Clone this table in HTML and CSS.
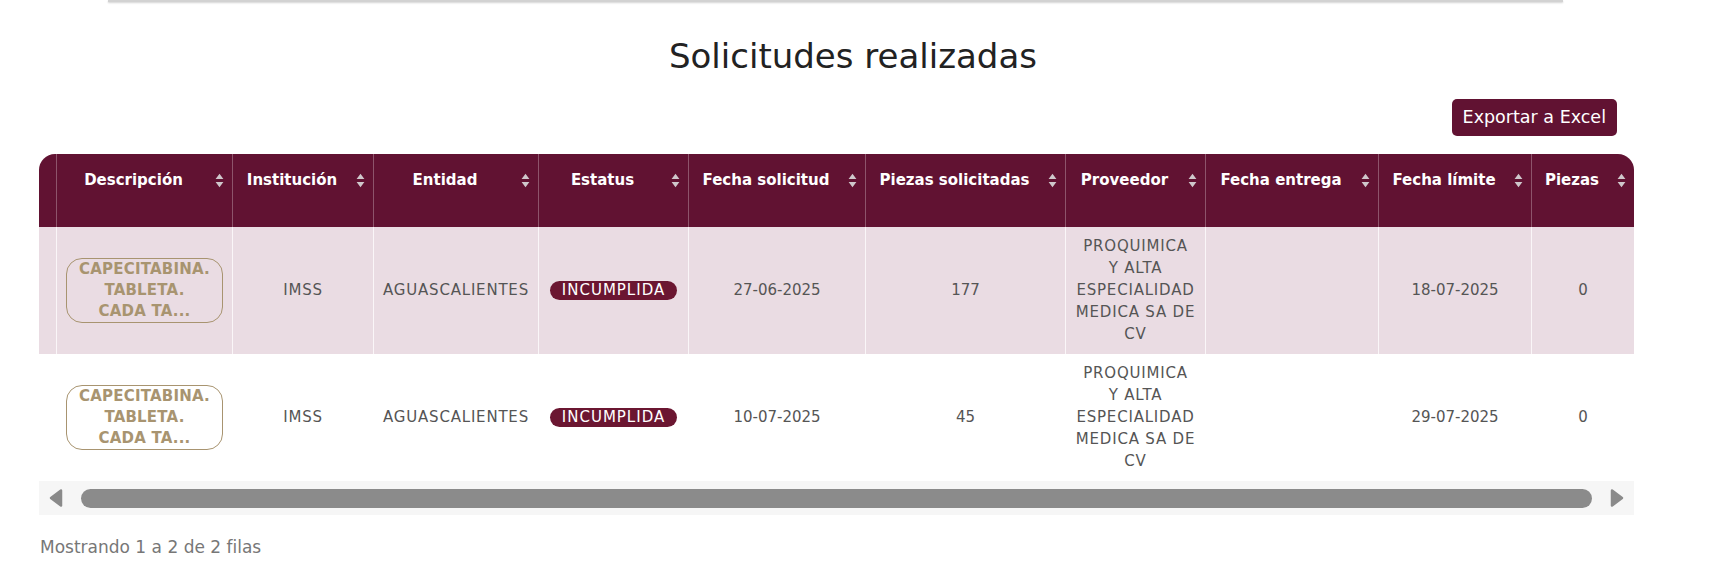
FILE: index.html
```html
<!DOCTYPE html>
<html lang="es">
<head>
<meta charset="utf-8">
<title>Solicitudes realizadas</title>
<link rel="stylesheet" href="styles.css">
</head>
<body>
<div class="topcard"></div>
<main class="section">
  <h1 class="title">Solicitudes realizadas</h1>
  <div class="toolbar">
    <button class="btn-export" type="button">Exportar a Excel</button>
  </div>
  <div class="table-wrap">
    <table class="grid">
      <colgroup>
        <col style="width:18px">
        <col style="width:176px">
        <col style="width:141px">
        <col style="width:165px">
        <col style="width:150px">
        <col style="width:177px">
        <col style="width:200px">
        <col style="width:140px">
        <col style="width:173px">
        <col style="width:153px">
        <col style="width:102px">
      </colgroup>
      <thead>
        <tr>
          <th class="th-blank"></th>
          <th><div class="th-inner"><span>Descripción</span></div><svg class="sort" viewBox="0 0 9 15"><path d="M4.5 0.8 L8.4 6 H0.6 Z M4.5 14.2 L0.6 9 H8.4 Z"/></svg></th>
          <th><div class="th-inner"><span>Institución</span></div><svg class="sort" viewBox="0 0 9 15"><path d="M4.5 0.8 L8.4 6 H0.6 Z M4.5 14.2 L0.6 9 H8.4 Z"/></svg></th>
          <th><div class="th-inner"><span>Entidad</span></div><svg class="sort" viewBox="0 0 9 15"><path d="M4.5 0.8 L8.4 6 H0.6 Z M4.5 14.2 L0.6 9 H8.4 Z"/></svg></th>
          <th><div class="th-inner"><span>Estatus</span></div><svg class="sort" viewBox="0 0 9 15"><path d="M4.5 0.8 L8.4 6 H0.6 Z M4.5 14.2 L0.6 9 H8.4 Z"/></svg></th>
          <th><div class="th-inner"><span>Fecha solicitud</span></div><svg class="sort" viewBox="0 0 9 15"><path d="M4.5 0.8 L8.4 6 H0.6 Z M4.5 14.2 L0.6 9 H8.4 Z"/></svg></th>
          <th><div class="th-inner"><span>Piezas solicitadas</span></div><svg class="sort" viewBox="0 0 9 15"><path d="M4.5 0.8 L8.4 6 H0.6 Z M4.5 14.2 L0.6 9 H8.4 Z"/></svg></th>
          <th><div class="th-inner"><span>Proveedor</span></div><svg class="sort" viewBox="0 0 9 15"><path d="M4.5 0.8 L8.4 6 H0.6 Z M4.5 14.2 L0.6 9 H8.4 Z"/></svg></th>
          <th><div class="th-inner"><span>Fecha entrega</span></div><svg class="sort" viewBox="0 0 9 15"><path d="M4.5 0.8 L8.4 6 H0.6 Z M4.5 14.2 L0.6 9 H8.4 Z"/></svg></th>
          <th><div class="th-inner"><span>Fecha límite</span></div><svg class="sort" viewBox="0 0 9 15"><path d="M4.5 0.8 L8.4 6 H0.6 Z M4.5 14.2 L0.6 9 H8.4 Z"/></svg></th>
          <th><div class="th-inner"><span>Piezas</span></div><svg class="sort" viewBox="0 0 9 15"><path d="M4.5 0.8 L8.4 6 H0.6 Z M4.5 14.2 L0.6 9 H8.4 Z"/></svg></th>
        </tr>
      </thead>
      <tbody>
        <tr class="row-odd">
          <td></td>
          <td><span class="pill">CAPECITABINA.<br>TABLETA.<br>CADA TA...</span></td>
          <td class="caps">IMSS</td>
          <td class="caps">AGUASCALIENTES</td>
          <td><span class="badge">INCUMPLIDA</span></td>
          <td>27-06-2025</td>
          <td>177</td>
          <td class="caps prov">PROQUIMICA<br>Y ALTA<br>ESPECIALIDAD<br>MEDICA SA DE<br>CV</td>
          <td></td>
          <td>18-07-2025</td>
          <td>0</td>
        </tr>
        <tr class="row-even">
          <td></td>
          <td><span class="pill">CAPECITABINA.<br>TABLETA.<br>CADA TA...</span></td>
          <td class="caps">IMSS</td>
          <td class="caps">AGUASCALIENTES</td>
          <td><span class="badge">INCUMPLIDA</span></td>
          <td>10-07-2025</td>
          <td>45</td>
          <td class="caps prov">PROQUIMICA<br>Y ALTA<br>ESPECIALIDAD<br>MEDICA SA DE<br>CV</td>
          <td></td>
          <td>29-07-2025</td>
          <td>0</td>
        </tr>
      </tbody>
    </table>
    <div class="scrollbar">
      <svg class="arrow" viewBox="0 0 16 20"><path d="M13 2.5 L3 10 L13 17.5 Z"/></svg>
      <div class="thumb"></div>
      <svg class="arrow" viewBox="0 0 16 20"><path d="M3 2.5 L13 10 L3 17.5 Z"/></svg>
    </div>
  </div>
  <p class="summary">Mostrando 1 a 2 de 2 filas</p>
</main>
</body>
</html>
```

FILE: styles.css
```css
* { box-sizing: border-box; }

html, body {
  margin: 0;
  padding: 0;
  background: #ffffff;
}

body {
  font-family: "DejaVu Sans", "Noto Sans", sans-serif;
  color: #555555;
}

.topcard {
  margin-left: 108px;
  width: 1455px;
  height: 2px;
  background: #d2d2d2;
  box-shadow: 0 1px 2px rgba(0, 0, 0, 0.18);
}

.section {
  width: 1667px;
  padding-left: 39px;
}

.title {
  margin: 34px 0 0;
  font-size: 34px;
  line-height: 41px;
  font-weight: 400;
  text-align: center;
  color: #222222;
}

.toolbar {
  display: flex;
  justify-content: flex-end;
  padding-right: 50px;
  margin-top: 22px;
}

.btn-export {
  height: 37px;
  padding: 0 11px;
  border: none;
  border-radius: 5px;
  background: #611232;
  color: #ffffff;
  font-family: inherit;
  font-size: 17.5px;
  line-height: 37px;
}

.table-wrap {
  width: 1595px;
  margin-top: 18px;
}

.grid {
  width: 1595px;
  table-layout: fixed;
  border-collapse: separate;
  border-spacing: 0;
}

.grid thead th {
  position: relative;
  height: 73px;
  padding: 0;
  vertical-align: top;
  background: #611232;
  color: #ffffff;
  font-size: 15px;
  font-weight: 700;
  border-right: 1px solid rgba(255, 255, 255, 0.28);
}

.grid thead th:first-child { border-top-left-radius: 16px; }
.grid thead th:last-child { border-top-right-radius: 16px; border-right: none; }

.th-inner {
  padding: 17px 30px 0 8px;
  line-height: 18px;
  text-align: center;
  white-space: nowrap;
}

.sort {
  position: absolute;
  right: 8px;
  top: 19px;
  width: 9px;
  height: 15px;
  fill: #cfc7cb;
}

.grid tbody td {
  padding: 8px 8px 9px;
  text-align: center;
  vertical-align: middle;
  font-size: 15px;
  line-height: 22px;
  color: #555555;
  border-right: 1px solid rgba(255, 255, 255, 0.75);
}

.grid tbody td:last-child { border-right: none; }

.row-odd td { background: #eadce3; }
.row-even td { background: #ffffff; }

.caps { letter-spacing: 0.8px; }

.prov { color: #666666; }

.pill {
  display: inline-block;
  width: 157px;
  border: 1.5px solid #a89470;
  border-radius: 16px;
  padding: 0 2px;
  color: #a89470;
  font-size: 15px;
  font-weight: 700;
  line-height: 21px;
  letter-spacing: 0.2px;
}

.badge {
  display: inline-block;
  height: 19px;
  padding: 0 12px;
  border-radius: 10px;
  background: #6b1631;
  color: #ffffff;
  font-size: 15px;
  line-height: 19px;
  letter-spacing: 1px;
}

.scrollbar {
  display: flex;
  align-items: center;
  gap: 17px;
  height: 34px;
  padding: 0 9px 0 9px;
  background: #f6f6f6;
}

.arrow {
  width: 16px;
  height: 20px;
  fill: #8a8a8a;
  stroke: #8a8a8a;
  stroke-width: 2.5;
  stroke-linejoin: round;
}

.thumb {
  flex: 1;
  height: 19px;
  border-radius: 10px;
  background: #8b8b8b;
}

.summary {
  margin: 22px 0 0 1px;
  font-size: 17px;
  line-height: 20px;
  color: #777777;
}
```
